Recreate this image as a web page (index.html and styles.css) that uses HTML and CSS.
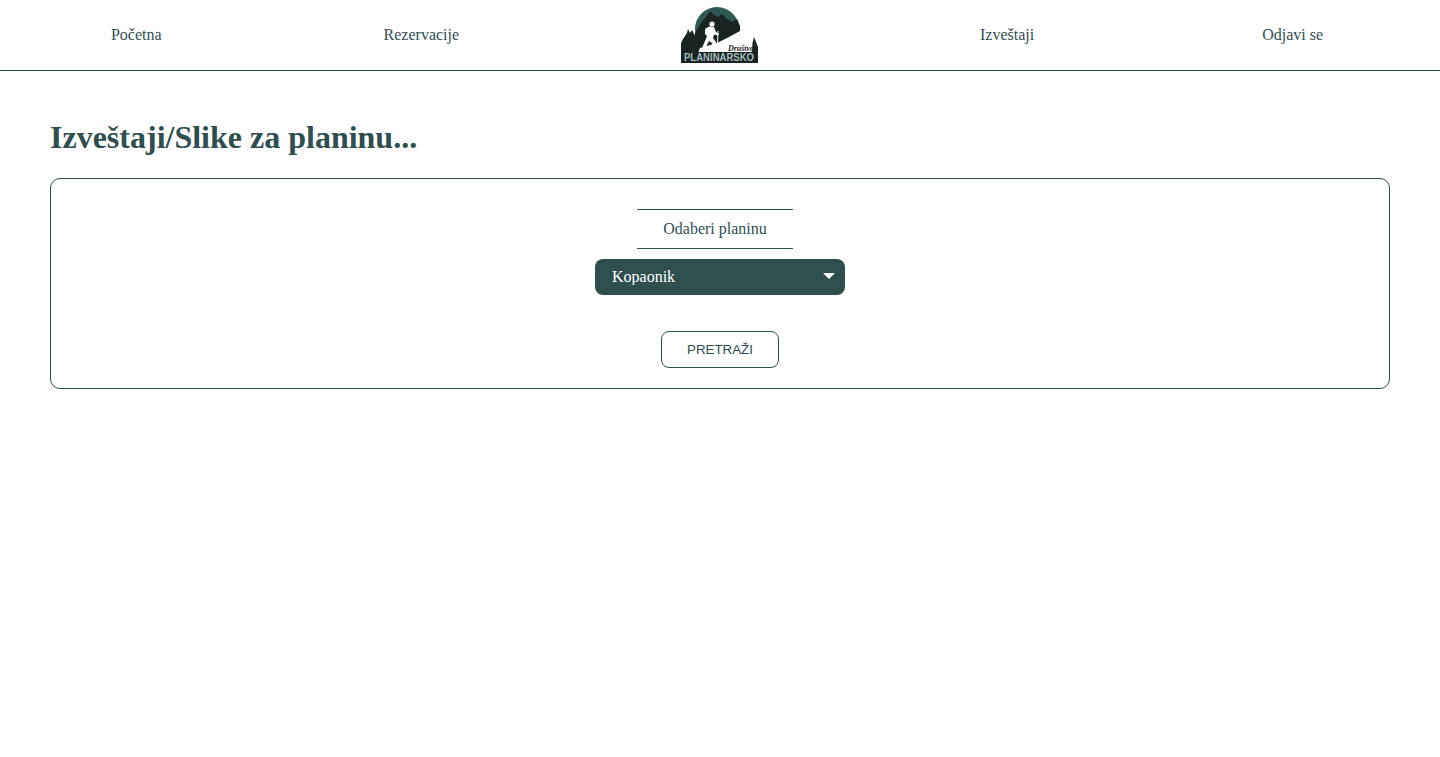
FILE: index.html
```html
<!DOCTYPE html>
<html lang="en">
<head>
    <meta charset="UTF-8">
    <meta name="viewport" content="width=device-width, initial-scale=1.0">
    <title>Izveštaji</title>
    <link rel="stylesheet" href="styles.css">
</head>
<body>
    <nav class="nav">
        <a href="#">Početna</a>
        <a href="#">Rezervacije</a>
        <a href="#" class="logo">
            <svg width="77" height="56" viewBox="0 0 77 56">
                <circle cx="36" cy="22" r="22" fill="#2f5754"/>
                <path d="M13 46 L14 26 L20 16 L25 10 L29 4 L33 8 L37 10 L41 7 L46 12 L51 15 L56 12 L59 19 L59 30 L40 46 Z" fill="#182322"/>
                <path d="M0 46 V36 L2 32 L4 29 L6 26 L7 22 L9 26 L11 23 L13 27 L16 31 L18 36 L20 46 Z" fill="#182322"/>
                <path d="M17 46 L19 41 L36 36 L48 30 L59 24 L64 28 L71 32 L72 46 Z" fill="#fff"/>
                <path d="M71 46 L71.5 36 L73 30 L75 35 L77 40 V46 Z" fill="#182322"/>
                <circle cx="31" cy="17" r="2.6" fill="#fff"/>
                <path d="M24 22 L28 19.5 L33 20 L35 25 L38 27 L37 28.5 L33 27.5 L32 31 L35 35 L35 40 L32 40 L31 36 L28 34 L25 40 L21 41 L24 34 L26 29 L24 27 Z" fill="#fff"/>
                <path d="M36.5 24 L37.5 24 L37 38 L36 38 Z" fill="#fff"/>
                <rect x="0" y="45" width="77" height="11" fill="#182322"/>
                <text x="38" y="54" class="logo-name" text-anchor="middle" textLength="70" lengthAdjust="spacingAndGlyphs">PLANINARSKO</text>
                <text x="60" y="44" class="logo-small" text-anchor="middle">Društvo</text>
            </svg>
        </a>
        <a href="#">Izveštaji</a>
        <a href="#" class="logout">Odjavi se</a>
    </nav>

    <main class="content">
        <h1>Izveštaji/Slike za planinu...</h1>
        <form class="card">
            <label for="mountain">Odaberi planinu</label>
            <div class="select-wrap">
                <select id="mountain" name="mountain">
                    <option>Kopaonik</option>
                </select>
            </div>
            <button type="button">PRETRAŽI</button>
        </form>
    </main>
</body>
</html>
```

FILE: styles.css
```css
* {
    box-sizing: border-box;
    margin: 0;
    padding: 0;
}
body {
    background-color: white;
    color: darkslategray;
    font-family: "Liberation Serif", "Times New Roman", serif;
    font-size: 16px;
}
a {
    color: darkslategray;
    text-decoration: none;
}
.nav {
    height: 71px;
    border-bottom: 1px solid darkslategray;
    display: flex;
    justify-content: space-around;
    align-items: center;
}
.logo {
    display: flex;
}
.logout {
    padding: 0 6px;
}
.logo-name {
    fill: #a3bdba;
    font-family: "Liberation Sans", sans-serif;
    font-size: 10px;
    font-weight: bold;
}
.logo-small {
    fill: #182322;
    font-family: "Liberation Serif", serif;
    font-size: 8px;
    font-style: italic;
    font-weight: bold;
}
.content {
    padding: 48px 50px 0;
}
h1 {
    font-size: 32px;
    line-height: 37px;
    margin-bottom: 22px;
}
.card {
    border: 1px solid darkslategray;
    border-radius: 10px;
    height: 211px;
    padding-top: 30px;
    display: flex;
    flex-direction: column;
    align-items: center;
}
label {
    display: block;
    width: 155.5px;
    height: 40px;
    margin-right: 10px;
    margin-bottom: 10px;
    border-top: 1px solid darkslategray;
    border-bottom: 1px solid darkslategray;
    line-height: 38px;
    text-align: center;
}
.select-wrap {
    position: relative;
    width: 250px;
    margin-bottom: 36px;
}
.select-wrap::after {
    content: "";
    position: absolute;
    top: 14px;
    right: 10px;
    border-left: 6px solid transparent;
    border-right: 6px solid transparent;
    border-top: 6px solid white;
}
select {
    display: block;
    width: 100%;
    height: 36px;
    padding: 0 17px 2px;
    appearance: none;
    border: none;
    border-radius: 8px;
    background-color: darkslategray;
    color: white;
    font-family: inherit;
    font-size: 16px;
}
button {
    width: 118px;
    height: 37px;
    background-color: white;
    border: 1px solid darkslategray;
    border-radius: 8px;
    color: darkslategray;
    font-family: "Liberation Sans", Arial, sans-serif;
    font-size: 13.33px;
    cursor: pointer;
}
```
